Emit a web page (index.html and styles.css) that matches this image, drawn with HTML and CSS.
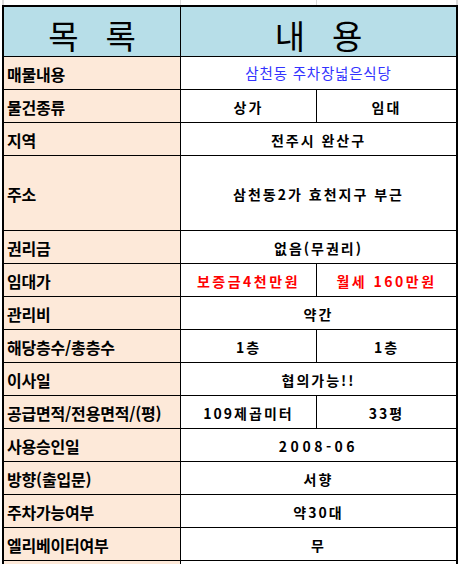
FILE: index.html
```html
<!DOCTYPE html>
<html lang="ko">
<head>
<meta charset="utf-8">
<title>매물 목록</title>
<link rel="stylesheet" href="styles.css">
</head>
<body>
<div class="sheet">
  <div class="strip">
    <div class="sc"></div><div class="sc"></div><div class="sc"></div>
  </div>
  <div class="table">
    <div class="head"><span>목</span><span>록</span></div>
    <div class="head wide"><span>내</span><span>용</span></div>

    <div class="lbl">매물내용</div>
    <div class="val wide blue">삼천동 주차장넓은식당</div>

    <div class="lbl">물건종류</div>
    <div class="val">상가</div>
    <div class="val">임대</div>

    <div class="lbl">지역</div>
    <div class="val wide">전주시 완산구</div>

    <div class="lbl">주소</div>
    <div class="val wide">삼천동2가 효천지구 부근</div>

    <div class="lbl">권리금</div>
    <div class="val wide">없음(무권리)</div>

    <div class="lbl">임대가</div>
    <div class="val red">보증금4천만원</div>
    <div class="val red">월세 160만원</div>

    <div class="lbl">관리비</div>
    <div class="val wide">약간</div>

    <div class="lbl">해당층수/총층수</div>
    <div class="val">1층</div>
    <div class="val">1층</div>

    <div class="lbl">이사일</div>
    <div class="val wide">협의가능!!</div>

    <div class="lbl">공급면적/전용면적/(평)</div>
    <div class="val">109제곱미터</div>
    <div class="val">33평</div>

    <div class="lbl">사용승인일</div>
    <div class="val wide num">2008-06</div>

    <div class="lbl">방향(출입문)</div>
    <div class="val wide">서향</div>

    <div class="lbl">주차가능여부</div>
    <div class="val wide">약30대</div>

    <div class="lbl">엘리베이터여부</div>
    <div class="val wide">무</div>

    <div class="lbl"></div>
    <div class="val wide"></div>
  </div>
</div>
</body>
</html>
```

FILE: styles.css
```css
html, body {
  margin: 0;
  padding: 0;
  background: #ffffff;
}

.sheet {
  padding-left: 2px;
  font-family: "Noto Sans CJK KR", "Noto Sans", sans-serif;
  color: #000000;
}

.strip {
  display: grid;
  grid-template-columns: 176px 135px 139px;
  column-gap: 1px;
  width: 452px;
  height: 5px;
  border-left: 2px solid #dadada;
  border-right: 2px solid #dadada;
  background: #dadada;
}

.sc {
  background: #ffffff;
}

.table {
  display: grid;
  grid-template-columns: 176px 135px 139px;
  grid-template-rows: 49px repeat(3, 32px) 74px repeat(10, 32px) 3px;
  gap: 1px;
  width: 452px;
  background: #000000;
  border: 2px solid #000000;
  border-bottom: none;
}

.table > div {
  display: flex;
  align-items: center;
  min-width: 0;
  white-space: nowrap;
  overflow: hidden;
  box-sizing: border-box;
}

.table > .head {
  background: #b7dee8;
  justify-content: center;
  gap: 27px;
  font-size: 33px;
  font-weight: 400;
  line-height: 1;
  padding-top: 7px;
  overflow: visible;
}

.wide {
  grid-column: span 2;
}

.lbl {
  background: #fde9d9;
  padding-left: 3px;
  font-size: 16px;
  font-weight: 700;
  letter-spacing: -0.2px;
  line-height: 1;
  padding-top: 2px;
}

.val {
  background: #ffffff;
  justify-content: center;
  font-size: 14px;
  font-weight: 700;
  letter-spacing: 2px;
  line-height: 1;
  padding-top: 2px;
}

.val.blue {
  color: #3333ff;
  font-size: 14.5px;
  font-weight: 400;
  letter-spacing: 0.8px;
  padding-top: 0;
}

.val.red {
  color: #ff0000;
  letter-spacing: 2.5px;
}

.val.num {
  letter-spacing: 3.5px;
}
```
